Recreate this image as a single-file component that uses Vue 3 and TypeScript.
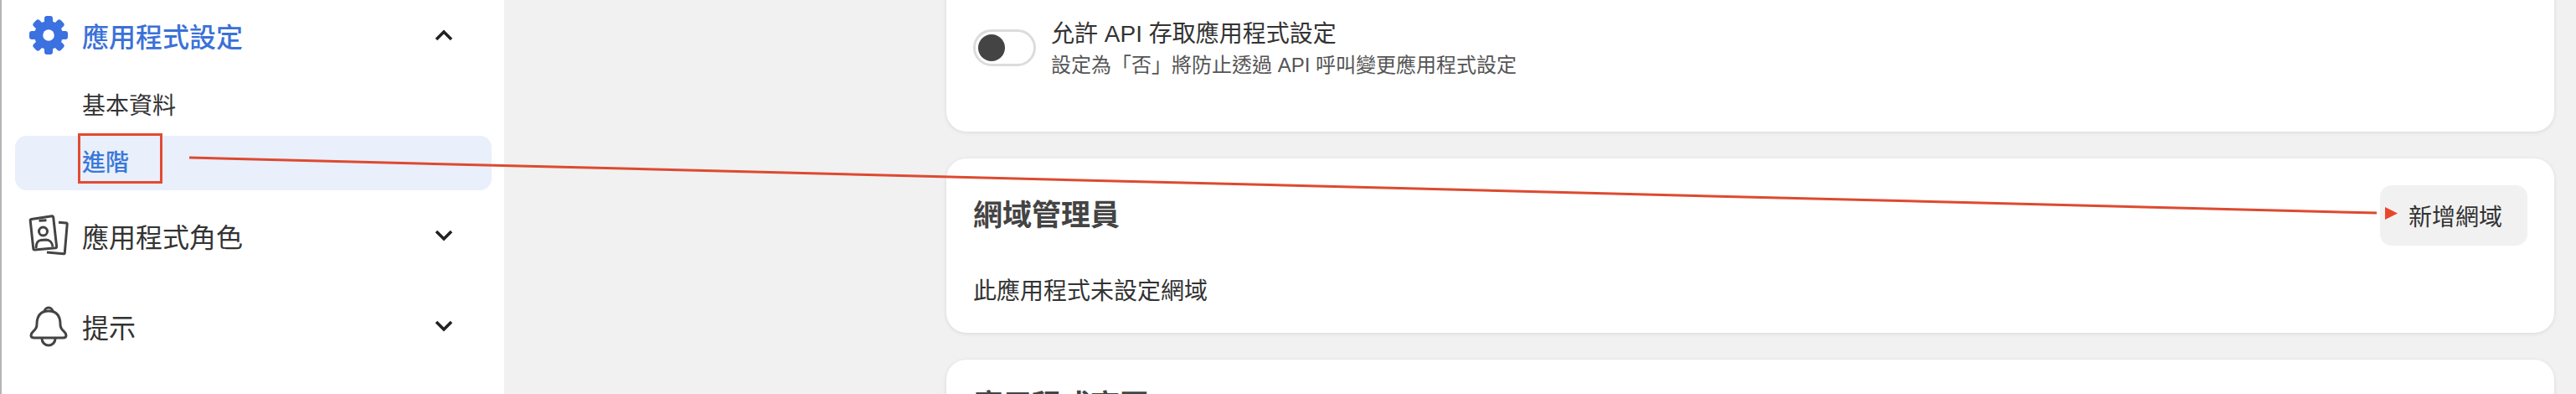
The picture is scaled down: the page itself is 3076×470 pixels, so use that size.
<script setup lang="ts">
const gearTeeth = [0, 45, 90, 135, 180, 225, 270, 315];
</script>

<template>
  <div class="page">
    <aside class="sidebar">
      <div class="nav-row nav-row-first active">
        <svg class="nav-icon" viewBox="0 0 50 50">
          <g fill="#3b71e0">
            <circle cx="25" cy="25" r="17" />
            <rect
              v-for="deg in gearTeeth"
              :key="deg"
              x="20"
              y="2"
              width="10"
              height="14"
              rx="3"
              :transform="`rotate(${deg} 25 25)`"
            />
          </g>
          <circle cx="25" cy="25" r="6.8" fill="#fff" />
        </svg>
        <span class="nav-label strong">應用程式設定</span>
        <svg class="chevron" viewBox="0 0 24 14"><path d="M3 12 L12 3 L21 12" /></svg>
      </div>

      <div class="sub-list">
        <div class="sub-item">基本資料</div>
        <div class="sub-item current">進階</div>
      </div>

      <div class="nav-row">
        <svg class="nav-icon outline" viewBox="0 0 50 50">
          <path d="M4.5 5.5 L29 1.8 Q30.5 1.6 30.7 3.2 L34.6 38 Q34.8 39.6 33.2 39.8 L8.6 42 Q7 42.1 6.8 40.6 L3.2 7.2 Q3 5.8 4.5 5.5 Z" />
          <path d="M37 9.2 L46 10 Q47.3 10.2 47.2 11.5 L44.3 45.5 Q44.2 47 42.7 46.8 L23 45" />
          <path d="M13.5 7.3 L22.5 6.8" />
          <circle cx="18.5" cy="20" r="5" />
          <path d="M10 40 C10.2 33 12 31 16 30.6 L22 30 C26 30 29.5 33 30 38.5" />
        </svg>
        <span class="nav-label">應用程式角色</span>
        <svg class="chevron" viewBox="0 0 24 14"><path d="M3 2 L12 11 L21 2" /></svg>
      </div>

      <div class="nav-row">
        <svg class="nav-icon outline" viewBox="0 0 50 50">
          <path d="M25 7 C14 7 11 15 11 23 C11 31 4 31 4 36 C4 38 6 39 8 39 H42 C44 39 46 38 46 36 C46 31 39 31 39 23 C39 15 36 7 25 7 Z" />
          <path d="M20 8 a5 5 0 0 1 10 0" />
          <path d="M17 40 a8 8 0 0 0 16 0" />
        </svg>
        <span class="nav-label">提示</span>
        <svg class="chevron" viewBox="0 0 24 14"><path d="M3 2 L12 11 L21 2" /></svg>
      </div>
    </aside>

    <main class="content">
      <section class="card card-api">
        <div class="toggle-row">
          <div class="toggle"><div class="knob"></div></div>
          <div class="toggle-text">
            <div class="toggle-title">允許 API 存取應用程式設定</div>
            <div class="toggle-desc">設定為「否」將防止透過 API 呼叫變更應用程式設定</div>
          </div>
        </div>
      </section>

      <section class="card card-domain">
        <div class="card-header">
          <h2>網域管理員</h2>
          <button class="add-btn">新增網域</button>
        </div>
        <p class="empty-text">此應用程式未設定網域</p>
      </section>

      <section class="card card-page">
        <h2>應用程式商頁</h2>
      </section>
    </main>

    <div class="mark-box"></div>
    <svg class="arrow" width="3076" height="470" viewBox="0 0 3076 470">
      <line x1="226" y1="188" x2="2838" y2="254" stroke="#dd4a30" stroke-width="3" />
      <polygon points="2848,247 2863,254.5 2848,262" fill="#e8452a" />
    </svg>
  </div>
</template>

<style scoped>
.page {
  position: relative;
  display: flex;
  width: 3076px;
  height: 470px;
  overflow: hidden;
  background: #f1f1f1;
  font-family: "Liberation Sans", "Noto Sans CJK TC", sans-serif;
  color: #333;
}
.sidebar {
  flex: none;
  width: 600px;
  height: 470px;
  background: #fff;
  border-left: 2px solid #b4b4b4;
}
.nav-row {
  display: flex;
  align-items: center;
  height: 108px;
  padding: 0 60px 0 31px;
}
.nav-row-first {
  height: 84px;
}
.nav-icon {
  flex: none;
  width: 50px;
  height: 50px;
}
.outline {
  fill: none;
  stroke: #444;
  stroke-width: 3;
}
.nav-label {
  margin-left: 15px;
  font-size: 32px;
  color: #333;
}
.nav-label.strong {
  font-weight: 500;
  color: #3b71d8;
}
.chevron {
  flex: none;
  width: 24px;
  height: 14px;
  margin-left: auto;
  fill: none;
  stroke: #222;
  stroke-width: 3.6;
}
.sub-list {
  display: flex;
  flex-direction: column;
  gap: 3px;
  margin-top: 10px;
}
.sub-item {
  height: 65px;
  margin: 0 15px 0 16px;
  padding-left: 80px;
  border-radius: 14px;
  font-size: 28px;
  line-height: 65px;
  color: #333;
}
.sub-item.current {
  background: #e9effb;
  color: #3b78d8;
  font-weight: 500;
}
.content {
  flex: none;
  display: flex;
  flex-direction: column;
  gap: 32px;
  width: 1920px;
  margin-left: 528px;
}
.card {
  flex: none;
  box-sizing: border-box;
  padding: 32px;
  background: #fff;
  border-radius: 24px;
  box-shadow: 0 1px 5px rgba(0, 0, 0, 0.1);
}
.card h2 {
  margin: 0;
  font-size: 35px;
  font-weight: 700;
  line-height: 46px;
  color: #444;
}
.card-api {
  height: 197px;
  margin-top: -40px;
  padding-top: 61px;
}
.toggle-row {
  display: flex;
  align-items: flex-start;
}
.toggle {
  flex: none;
  box-sizing: border-box;
  width: 75px;
  height: 44px;
  margin-top: 14px;
  padding: 3px;
  border: 3px solid #dcdcdc;
  border-radius: 22px;
}
.knob {
  width: 32px;
  height: 32px;
  border-radius: 50%;
  background: #444;
}
.toggle-text {
  margin-left: 18px;
}
.toggle-title {
  font-size: 28px;
  line-height: 40px;
  color: #333;
}
.toggle-desc {
  font-size: 24px;
  line-height: 34px;
  color: #555;
}
.card-domain {
  height: 208px;
}
.card-header {
  display: flex;
  align-items: center;
  justify-content: space-between;
  height: 72px;
}
.add-btn {
  width: 176px;
  height: 72px;
  padding: 0 0 0 4px;
  border: 0;
  border-radius: 14px;
  background: #f1f1f1;
  font-family: inherit;
  font-size: 28px;
  color: #333;
}
.empty-text {
  margin: 35px 0 0;
  font-size: 28px;
  line-height: 40px;
  color: #333;
}
.card-page {
  height: 120px;
}
.mark-box {
  position: absolute;
  left: 93px;
  top: 159px;
  box-sizing: border-box;
  width: 101px;
  height: 60px;
  border: 3px solid #e24a33;
}
.arrow {
  position: absolute;
  left: 0;
  top: 0;
  pointer-events: none;
}
</style>
